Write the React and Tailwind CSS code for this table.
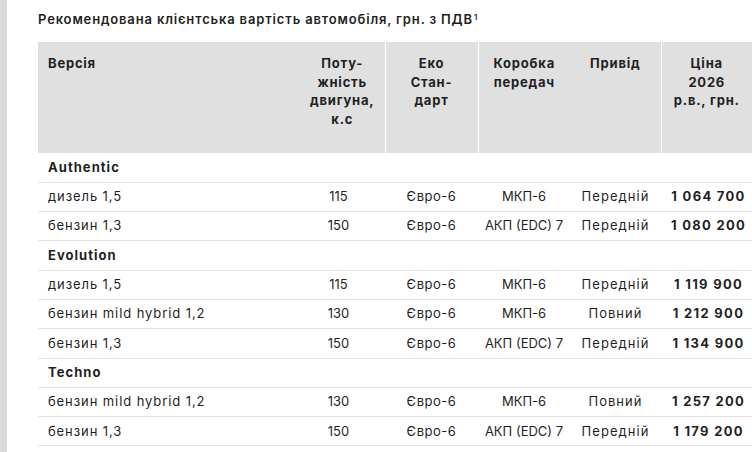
const rows = [
  { group: "Authentic" },
  { name: "дизель 1,5", hp: "115", eco: "Євро-6", gear: "МКП-6", drive: "Передній", price: "1 064 700" },
  { name: "бензин 1,3", hp: "150", eco: "Євро-6", gear: "АКП (EDC) 7", drive: "Передній", price: "1 080 200" },
  { group: "Evolution" },
  { name: "дизель 1,5", hp: "115", eco: "Євро-6", gear: "МКП-6", drive: "Передній", price: "1 119 900" },
  { name: "бензин mild hybrid 1,2", hp: "130", eco: "Євро-6", gear: "МКП-6", drive: "Повний", price: "1 212 900" },
  { name: "бензин 1,3", hp: "150", eco: "Євро-6", gear: "АКП (EDC) 7", drive: "Передній", price: "1 134 900" },
  { group: "Techno" },
  { name: "бензин mild hybrid 1,2", hp: "130", eco: "Євро-6", gear: "МКП-6", drive: "Повний", price: "1 257 200" },
  { name: "бензин 1,3", hp: "150", eco: "Євро-6", gear: "АКП (EDC) 7", drive: "Передній", price: "1 179 200" },
];

export default function App() {
  return (
    <div
      className="flex min-h-[452px] w-[752px] overflow-hidden bg-white text-[#1f1f1f]"
      style={{ fontFamily: "Inter, 'Noto Sans', sans-serif" }}
    >
      {/* left gray strip */}
      <div className="w-[7px] shrink-0 bg-[#d9d9d9]" />

      <div className="pl-[31px] pt-[9px]">
        <h2 className="text-[13px] font-semibold leading-5 tracking-[0.065em]">
          Рекомендована клієнтська вартість автомобіля, грн. з ПДВ
          <sup className="ml-px text-[8px] font-semibold">1</sup>
        </h2>

        <table className="mt-[13px] w-[714px] table-fixed border-collapse text-[13px]">
          <colgroup>
            <col className="w-[262px]" />
            <col className="w-[85px]" />
            <col className="w-[93px]" />
            <col className="w-[92px]" />
            <col className="w-[91px]" />
            <col className="w-[91px]" />
          </colgroup>
          <thead>
            <tr className="h-[111px] bg-[#e0e0e0] align-top text-[13px] font-bold leading-[18.5px] tracking-[0.06em]">
              <th className="pl-[10px] pt-[12px] text-left">Версія</th>
              <th className="pt-[12px] text-center">
                Поту-
                <br />
                жність
                <br />
                двигуна,
                <br />
                к.с
              </th>
              <th className="border-l border-white pt-[12px] text-center">
                Еко
                <br />
                Стан-
                <br />
                дарт
              </th>
              <th className="border-l border-white pt-[12px] text-center">
                Коробка
                <br />
                передач
              </th>
              <th className="pt-[12px] text-center">Привід</th>
              <th className="border-l border-white pt-[12px] text-center">
                Ціна
                <br />
                2026
                <br />
                р.в., грн.
              </th>
            </tr>
          </thead>
          <tbody>
            {rows.map((r, i) =>
              r.group ? (
                <tr key={i} className="h-[29.3px] border-b border-[#e3e3e3]">
                  <td colSpan={6} className="pl-[10px] font-bold tracking-[0.08em]">
                    {r.group}
                  </td>
                </tr>
              ) : (
                <tr key={i} className="h-[29.3px] border-b border-[#e3e3e3]">
                  <td className="pl-[10px] tracking-[0.07em]">{r.name}</td>
                  <td className="pr-[8px] text-center">{r.hp}</td>
                  <td className="text-center tracking-[0.04em]">{r.eco}</td>
                  <td className="whitespace-nowrap text-center">{r.gear}</td>
                  <td className="text-center tracking-[0.08em]">{r.drive}</td>
                  <td className="pl-[4px] text-center font-bold tracking-[0.1em]">{r.price}</td>
                </tr>
              )
            )}
          </tbody>
        </table>
      </div>
    </div>
  );
}
